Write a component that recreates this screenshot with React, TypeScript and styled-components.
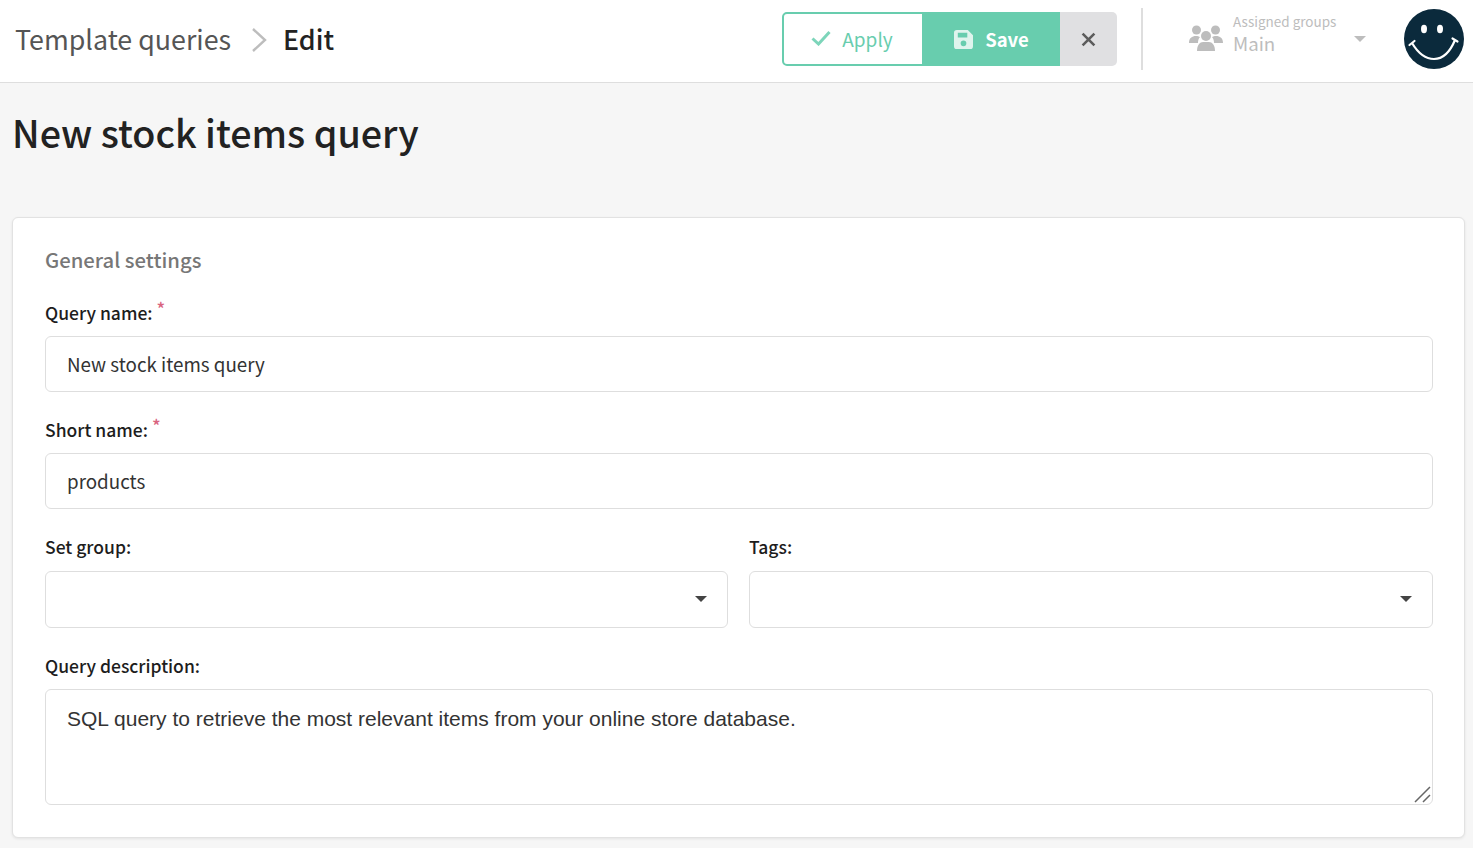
import React from 'react';
import styled, { createGlobalStyle } from 'styled-components';

const sans = `"Noto Sans CJK SC", "Noto Sans", sans-serif`;

const GlobalStyle = createGlobalStyle`
    html, body {
        margin: 0;
        padding: 0;
        background: #f6f6f6;
        font-family: ${sans};
        overflow: hidden;
    }
    * {
        box-sizing: border-box;
    }
`;

const Page = styled.div`
    width: 1473px;
    height: 848px;
    overflow: hidden;
`;

const Header = styled.header`
    display: flex;
    align-items: center;
    height: 83px;
    padding: 0 9px 0 15px;
    background: #fff;
    border-bottom: 1px solid #dedede;
`;

const Crumbs = styled.div`
    display: flex;
    align-items: center;
    flex: 1;
    height: 80px;
    padding-bottom: 5px;
    font-size: 26.8px;
`;

const CrumbLink = styled.span`
    color: #555;
    font-weight: 400;
`;

const CrumbCurrent = styled.span`
    color: #222;
    font-weight: 500;
`;

const Chevron = styled.svg`
    width: 16px;
    height: 26px;
    margin: 3px 16px 0 20px;
`;

const ButtonGroup = styled.div`
    display: flex;
    height: 54px;
    margin-bottom: 4px;
`;

const ApplyButton = styled.button`
    display: flex;
    align-items: center;
    justify-content: center;
    gap: 11px;
    width: 141px;
    padding: 0 2px 2px 0;
    background: #fff;
    border: 2px solid #68cdae;
    border-right-width: 1px;
    border-radius: 5px 0 0 5px;
    color: #68cdae;
    font: 400 19px ${sans};
`;

const SaveButton = styled.button`
    display: flex;
    align-items: center;
    justify-content: center;
    gap: 12px;
    width: 137px;
    padding: 0;
    background: #68cdae;
    border: 0;
    color: #fff;
    font: 600 18.5px ${sans};
`;

const CloseButton = styled.button`
    display: flex;
    align-items: center;
    justify-content: center;
    width: 57px;
    padding: 0;
    background: #e0e0e2;
    border: 0;
    border-radius: 0 5px 5px 0;
`;

const Divider = styled.div`
    width: 2px;
    height: 62px;
    margin: 0 46px 4px 24px;
    background: #dedede;
`;

const GroupPicker = styled.div`
    display: flex;
    align-items: center;
    width: 178px;
    margin-right: 37px;
    margin-bottom: 4px;
`;

const GroupIcon = styled.svg`
    flex: none;
    margin-bottom: 2px;
`;

const GroupText = styled.div`
    display: flex;
    flex-direction: column;
    margin: 0 0 11px 10px;
    width: 121px;
`;

const GroupLabel = styled.span`
    color: #bdbdbd;
    font-size: 13.5px;
    line-height: 18px;
`;

const GroupValue = styled.span`
    color: #bdbdbd;
    font-size: 18.7px;
    line-height: 26px;
`;

const Caret = styled.span<{ $color: string; $size: number }>`
    display: block;
    width: 0;
    height: 0;
    border-left: ${p => p.$size}px solid transparent;
    border-right: ${p => p.$size}px solid transparent;
    border-top: ${p => p.$size}px solid ${p => p.$color};
`;

const Avatar = styled.svg`
    width: 60px;
    height: 60px;
    flex: none;
    margin-bottom: 4px;
`;

const Main = styled.main`
    padding: 0 8px 0 12px;
`;

const Title = styled.h1`
    margin: 0;
    height: 134px;
    padding-top: 21px;
    color: #222;
    font-size: 37.7px;
    line-height: 56px;
    font-weight: 500;
`;

const Card = styled.section`
    height: 621px;
    padding: 24px 31px 0 32px;
    background: #fff;
    border: 1px solid #e2e2e2;
    border-radius: 6px;
    box-shadow: 0 1px 3px rgba(0, 0, 0, 0.08);
`;

const CardTitle = styled.h2`
    margin: 0 0 27px;
    color: #777;
    font-size: 20.3px;
    line-height: 34px;
    font-weight: 500;
`;

const Field = styled.div`
    margin-bottom: 28px;
`;

const Label = styled.label`
    display: block;
    height: 33px;
    color: #1d1d1d;
    font-size: 17.5px;
    line-height: 20px;
    font-weight: 500;
`;

const Required = styled.span`
    margin-left: 4px;
    color: #d9647f;
    font-size: 18px;
    line-height: 0;
    vertical-align: 4px;
`;

const TextInput = styled.input`
    display: block;
    width: 100%;
    height: 56px;
    padding: 0 21px 2px;
    background: #fff;
    border: 1px solid #dedede;
    border-radius: 6px;
    color: #333;
    font: 400 18.8px ${sans};
    outline: none;
`;

const Row = styled.div`
    display: grid;
    grid-template-columns: 683px 684px;
    gap: 21px;
    margin-bottom: 28px;
`;

const Select = styled.div`
    display: flex;
    align-items: center;
    justify-content: flex-end;
    height: 57px;
    margin-top: 1px;
    padding: 0 20px 2px 0;
    background: #fff;
    border: 1px solid #dedede;
    border-radius: 6px;
`;

const DescriptionWrap = styled.div`
    position: relative;
`;

const Description = styled.textarea`
    display: block;
    width: 100%;
    height: 116px;
    padding: 15px 21px;
    background: #fff;
    border: 1px solid #dedede;
    border-radius: 6px;
    color: #333;
    font: 400 21px/28px "Liberation Sans", Arial, sans-serif;
    outline: none;
    resize: none;
`;

const Grip = styled.svg`
    position: absolute;
    right: 1px;
    bottom: 1px;
    width: 18px;
    height: 18px;
`;

export default function App() {
    return (
        <Page>
            <GlobalStyle />
            <Header>
                <Crumbs>
                    <CrumbLink>Template queries</CrumbLink>
                    <Chevron viewBox="0 0 16 26" fill="none">
                        <path d="M2 2l12 11L2 24" stroke="#bdbdbd" strokeWidth="2.4" />
                    </Chevron>
                    <CrumbCurrent>Edit</CrumbCurrent>
                </Crumbs>
                <ButtonGroup>
                    <ApplyButton>
                        <svg width="20" height="16" viewBox="0 0 20 16" fill="none">
                            <path d="M1.5 8.5l6 5.5L18.5 2" stroke="#7dd5ba" strokeWidth="3" />
                        </svg>
                        Apply
                    </ApplyButton>
                    <SaveButton>
                        <svg width="19" height="19" viewBox="0 0 20 20">
                            <path
                                fill="#dff4ed"
                                fillRule="evenodd"
                                d="M3 0h11.5L20 5.5V17a3 3 0 0 1-3 3H3a3 3 0 0 1-3-3V3a3 3 0 0 1 3-3zm1 3v5h10V3H4zm6 8a3 3 0 1 0 0 6 3 3 0 0 0 0-6z"
                            />
                        </svg>
                        Save
                    </SaveButton>
                    <CloseButton>
                        <svg width="15" height="15" viewBox="0 0 14 14" fill="none">
                            <path d="M1.5 1.5l11 11M12.5 1.5l-11 11" stroke="#5c5c5c" strokeWidth="2.4" />
                        </svg>
                    </CloseButton>
                </ButtonGroup>
                <Divider />
                <GroupPicker>
                    <GroupIcon width="34" height="28" viewBox="0 0 34 28" fill="#bdbdbd">
                        <circle cx="7.500" cy="6" r="4.500" />
                        <circle cx="26.500" cy="6" r="4.500" />
                        <circle cx="17" cy="12" r="5" />
                        <path d="M0 19c0-5 3-7 7-7 1.500 0 3 .5 4 1-1.500 1.500-2 3.500-2 6H0z" />
                        <path d="M34 19c0-5-3-7-7-7-1.500 0-3 .5-4 1 1.500 1.500 2 3.500 2 6h9z" />
                        <path d="M8 27c0-6 3-9 6-9h6c3 0 6 3 6 9H8z" />
                    </GroupIcon>
                    <GroupText>
                        <GroupLabel>Assigned groups</GroupLabel>
                        <GroupValue>Main</GroupValue>
                    </GroupText>
                    <Caret $color="#bdbdbd" $size={6} />
                </GroupPicker>
                <Avatar viewBox="0 0 60 60">
                    <circle cx="30" cy="30" r="30" fill="#0b2a3c" />
                    <ellipse cx="20" cy="20" rx="3" ry="4.200" fill="#fff" />
                    <ellipse cx="36" cy="20" rx="3" ry="4.200" fill="#fff" />
                    <path d="M8 34C14 44 22 50 30 50C39 50 46 43 51 31" fill="none" stroke="#fff" strokeWidth="2.200" />
                    <path d="M5.500 36L10.500 32M48.500 29.500L53.500 32.500" stroke="#fff" strokeWidth="2.200" strokeLinecap="round" />
                </Avatar>
            </Header>
            <Main>
                <Title>New stock items query</Title>
                <Card>
                    <CardTitle>General settings</CardTitle>
                    <Field>
                        <Label>
                            Query name:<Required>*</Required>
                        </Label>
                        <TextInput readOnly defaultValue="New stock items query" />
                    </Field>
                    <Field>
                        <Label>
                            Short name:<Required>*</Required>
                        </Label>
                        <TextInput readOnly defaultValue="products" />
                    </Field>
                    <Row>
                        <div>
                            <Label>Set group:</Label>
                            <Select>
                                <Caret $color="#444" $size={6} />
                            </Select>
                        </div>
                        <div>
                            <Label>Tags:</Label>
                            <Select>
                                <Caret $color="#444" $size={6} />
                            </Select>
                        </div>
                    </Row>
                    <div>
                        <Label>Query description:</Label>
                        <DescriptionWrap>
                            <Description
                                readOnly
                                defaultValue="SQL query to retrieve the most relevant items from your online store database."
                            />
                            <Grip viewBox="0 0 18 18" fill="none">
                                <path d="M1 16L16 1M9 16L16 9" stroke="#666" strokeWidth="1.500" />
                            </Grip>
                        </DescriptionWrap>
                    </div>
                </Card>
            </Main>
        </Page>
    );
}
